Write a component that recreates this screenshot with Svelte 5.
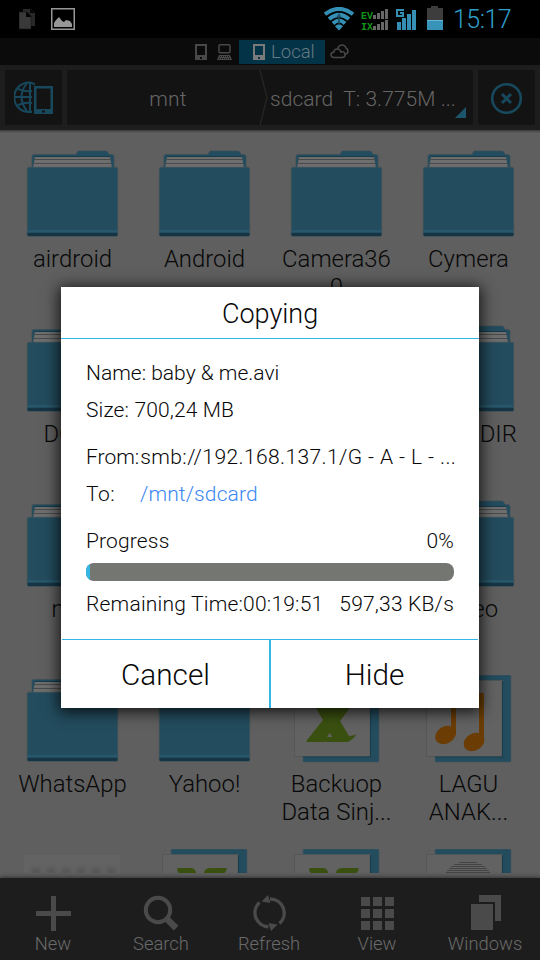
<script>
  const items = [
    { name: 'airdroid', type: 'folder' },
    { name: 'Android', type: 'folder' },
    { name: 'Camera360', type: 'folder' },
    { name: 'Cymera', type: 'folder' },
    { name: 'DCIM', type: 'folder' },
    { name: '', type: 'folder' },
    { name: '', type: 'folder' },
    { name: 'LOST.DIR', type: 'folder' },
    { name: 'mnt', type: 'folder' },
    { name: '', type: 'folder' },
    { name: '', type: 'folder' },
    { name: 'Video', type: 'folder' },
    { name: 'WhatsApp', type: 'folder' },
    { name: 'Yahoo!', type: 'folder' },
    { name: 'Backuop Data Sinj...', type: 'sheet' },
    { name: 'LAGU ANAK...', type: 'music' },
    { name: '', type: 'blank' },
    { name: '', type: 'sheet' },
    { name: '', type: 'sheet' },
    { name: '', type: 'print' },
  ]

  const actions = ['New', 'Search', 'Refresh', 'View', 'Windows']

  let progress = $state(1.1)
</script>

{#snippet phone()}
  <svg class="phone" width="12" height="16" viewBox="0 0 12 16">
    <path fill="currentColor" fill-rule="evenodd" d="M0 0h12v16H0zM2 2v9h8V2zM5 13v2h2v-2z" />
  </svg>
{/snippet}

<div class="screen">
  <header class="status">
    <svg class="copy" width="17" height="22" viewBox="0 0 17 22">
      <path fill="#292929" d="M4 1h8l4 4v13H4z" />
      <path fill="#393939" stroke="#151515" stroke-width=".6" d="M0 4h8l4 4v13H0z" />
      <path fill="#050505" d="M7 4v5h5v-1L8 4zM11 1v4h5z" />
    </svg>
    <svg class="picture" width="24" height="22" viewBox="0 0 24 22">
      <rect x=".75" y=".75" width="22.5" height="20.5" fill="none" stroke="#979797" stroke-width="1.5" />
      <path fill="#979797" d="M3 19v-4l2-3 3-3 3 4 2 1 2-2 4 1 2 3v3z" />
    </svg>
    <span class="gap"></span>
    <svg class="wifi" width="30" height="24" viewBox="0 0 30 24">
      <g fill="none" stroke="#358fb5" stroke-width="4">
        <path d="M1 7.200Q15-3.500 29 7.200" />
        <path d="M5 12Q15 3.700 25 12" />
        <path d="M9 16.500Q15 10.500 21 16.500" />
      </g>
      <path fill="#358fb5" d="M11 19.200Q15 15.500 19 19.200L15 23.500z" />
      <path fill="#174454" d="M15 6l2.500 4H16v8h-2v-8h-1.500z" opacity=".75" />
    </svg>
    <svg class="dual" width="28" height="22" viewBox="0 0 28 22">
      <text class="net" x="0" y="10">EV</text>
      <text class="net" x="0" y="21">IX</text>
      <path
        fill="#676767"
        d="M12 6h3v4h-3zM16 4h3v6h-3zM20 2h3v8h-3zM24 0h3v10h-3zM12 17h3v4h-3zM16 15h3v6h-3zM20 13h3v8h-3zM24 11h3v10h-3z"
      />
    </svg>
    <svg class="signal" width="20" height="22" viewBox="0 0 20 22">
      <path fill="#358fb5" d="M1 14h4v8H1zM6 10h4v12H6zM11 6h4v16h-4zM16 2h4v20h-4z" />
      <path fill="none" stroke="#358fb5" stroke-width="2" d="M8 2H1v6h6V5H4" />
    </svg>
    <svg class="battery" width="16" height="24" viewBox="0 0 16 24">
      <path fill="#3d3d3d" d="M0 2h4V0h7v2h5v13H0z" />
      <path fill="#3793b8" d="M0 14h16v10H0z" />
      <path fill="#65b7d5" d="M0 14h16v1H0z" />
    </svg>
    <span class="time">15:17</span>
  </header>

  <nav class="tabs">
    {@render phone()}
    <svg class="laptop" width="15" height="16" viewBox="0 0 15 16">
      <rect x="2" y=".8" width="11" height="8" rx="1" fill="none" stroke="#484848" stroke-width="1.500" />
      <path fill="#484848" d="M2 11h11l2 5H0z" />
      <path stroke="#151515" stroke-dasharray="1 1" d="M3 12.500h10M2 14.500h11" />
    </svg>
    <div class="local">{@render phone()}<span>Local</span></div>
    <svg class="cloud" width="19" height="15" viewBox="0 0 19 15">
      <g fill="#0b0b0b" stroke="#484848" stroke-width="1.500">
        <path d="M8 4q1-3 4-3t4 3q2 1 2 3 0 3-3 3H8z" />
        <path d="M4 13.500q-3 0-3-3 0-2 3-2.500 0-3 3.500-3Q10 5 11 8q4-1 4 3 0 2.500-3 2.500z" />
      </g>
    </svg>
  </nav>

  <div class="path-bar">
    <button class="tile" aria-label="Network">
      <svg width="40" height="34" viewBox="0 0 40 34">
        <g fill="none" stroke="#17485c" stroke-width="2">
          <path d="M21 3.500Q18 1.500 15 1.500A14.500 14.500 0 0 0 15 31h3" />
          <path d="M16 1v30M13 2q-11 14 0 28M1 16h17M4 8q8 3 14 2M4 24q7-3 14-2" />
        </g>
        <path fill="#17485c" fill-rule="evenodd" d="M20 5h19v28H20zM22.500 7.500V28h14V7.500zM28 29.500v2h3v-2z" />
      </svg>
    </button>
    <div class="crumbs">
      <span class="crumb">mnt</span>
      <svg class="chevron" width="10" height="55" viewBox="0 0 10 55">
        <path fill="none" stroke="#242424" stroke-width="1.500" d="M1 0l7 27.500L1 55" />
      </svg>
      <span class="crumb-last">sdcard&nbsp; T: 3.775M ...</span>
      <svg class="corner" width="11" height="11" viewBox="0 0 11 11"><path fill="#1c566c" d="M11 0v11H0z" /></svg>
    </div>
    <button class="tile" aria-label="Close">
      <svg width="32" height="32" viewBox="0 0 32 32">
        <g fill="none" stroke="#17485c">
          <circle cx="15.500" cy="16.500" r="14.300" stroke-width="2.600" />
          <path stroke-width="3" d="M11 12l9 9M20 12l-9 9" />
        </g>
      </svg>
    </button>
  </div>

  <main>
    <div class="grid">
      {#each items as item}
        <div class="item">
          <svg class="icon" width="100" height="90" viewBox="0 0 100 90">
            {#if item.type === 'folder'}
              <path fill="#234c5e" stroke="#3d5058" stroke-width=".7" d="M10 18V6q0-1.500 2-1.500h42L56 1h28q2 0 3 3.500h3q2 0 2 2V18z" />
              <path fill="#6e6e6e" d="M13 7h75l2 11H11z" />
              <path stroke="#173b4b" stroke-width="1" d="M13 6.500h75" />
              <path stroke="#484b4c" stroke-width="1" d="M12 9.500h77M11 13.500h79" />
              <rect x="5.300" y="17.300" width="90.400" height="69" rx="1.500" fill="#234c5e" stroke="#3f5159" stroke-width=".7" />
              <path fill="#28576b" d="M5.500 80h90v2h-90z" />
              <path fill="#153545" d="M5.500 83h90v2q0 1-2 1h-86q-2 0-2-1z" />
            {:else if item.type === 'blank'}
              <rect x="2" y="6" width="96" height="60" fill="#636363" />
              <path class="holes" stroke="#525252" stroke-width="5" stroke-dasharray="8 7" d="M10 22h83" />
            {:else}
              <rect x="17" y="0" width="76" height="87" rx="1" fill="#234c5e" stroke="#46565c" stroke-width=".6" />
              <rect x="8.500" y="5.500" width="76" height="76" fill="#626262" stroke="#505557" stroke-width=".8" />
              <path fill="none" stroke="#1b3e4d" stroke-width="1.200" d="M84.500 6v76H17" />
              {#if item.type === 'sheet'}
                <path
                  fill="#3a5010"
                  fill-rule="evenodd"
                  d="M24 19h13q3 0 4 2l5 11 5-11q2-2 5-2h15q3 0 1 3L54 46l9 15q4 0 7-2-1 4-8 8H21q-1 0 0-2l16-20-14-24q0-2 1-2zM44 58l-3 4h5z"
                />
              {:else if item.type === 'music'}
                <g fill="#6b3d04">
                  <path d="M33 18h33v6H38v36h-5zM61 18h5v48h-5z" />
                  <ellipse cx="27.500" cy="60" rx="11" ry="8.500" transform="rotate(-30 27.500 60)" />
                  <ellipse cx="56" cy="67" rx="11" ry="8.500" transform="rotate(-30 56 67)" />
                </g>
              {:else}
                <path stroke="#444" stroke-width="1" d="M41 13.500h18M36 15.500h28M33 17.500h34M31 19.500h38M29 21.500h42M28 23.500h44" />
              {/if}
            {/if}
          </svg>
          <span class="name">{item.name}</span>
        </div>
      {/each}
    </div>
  </main>

  <footer>
    {#each actions as action}
      <button class="action">
        <svg width="36" height="37" viewBox="0 0 36 37">
          {#if action === 'New'}
            <path fill="#4a4a4a" d="M16 1h5v15h15v5H21v15h-5V21H1v-5h15z" />
          {:else if action === 'Search'}
            <g fill="none" stroke="#4a4a4a">
              <circle cx="15" cy="15" r="12.200" stroke-width="4" />
              <path stroke-width="6.500" d="M24.500 24.500l8.500 8.500" stroke-linecap="square" stroke-dasharray="9 20" />
            </g>
          {:else if action === 'Refresh'}
            <g fill="none" stroke="#4a4a4a" stroke-width="3.400">
              <path d="M8.500 7.500A14 14 0 0 0 17.500 31.800" />
              <path d="M19 4A14 14 0 0 1 28.500 28.500" />
            </g>
            <path fill="#4a4a4a" d="M10.500 6.500L17 0 19.500 8zM26.500 29.500L20 36 17.500 28z" />
          {:else if action === 'View'}
            <path
              fill="#4a4a4a"
              d="M2 2h9v9H2zM14 2h9v9h-9zM26 2h9v9h-9zM2 14h9v9H2zM14 14h9v9h-9zM26 14h9v9h-9zM2 26h9v9H2zM14 26h9v9h-9zM26 26h9v9h-9z"
            />
          {:else}
            <path fill="#4a4a4a" d="M12 0h22v26h-6V7H12zM4 9h22v26H4z" />
          {/if}
        </svg>
        <span>{action}</span>
      </button>
    {/each}
  </footer>

  <section class="dialog">
    <h1>Copying</h1>
    <div class="body">
      <p class="file">Name: baby &amp; me.avi</p>
      <p class="size">Size: 700,24 MB</p>
      <p class="from"><span>From:</span><span class="from-path">smb://192.168.137.1/G - A - L - ...</span></p>
      <p class="to"><span class="to-label">To:</span><span class="link">/mnt/sdcard</span></p>
      <p class="split progress"><span>Progress</span><span>0%</span></p>
      <div class="bar"><div class="fill" style="width: {progress}%"></div></div>
      <p class="split remaining"><span>Remaining Time:00:19:51</span><span>597,33 KB/s</span></p>
    </div>
    <div class="buttons">
      <button>Cancel</button>
      <button>Hide</button>
    </div>
  </section>
</div>

<style>
  :global(body) {
    margin: 0;
    background: #000;
  }

  .screen {
    position: relative;
    display: flex;
    flex-direction: column;
    width: 540px;
    height: 960px;
    overflow: hidden;
    background: #5f5f5f;
    font-family: Roboto, sans-serif;
    font-weight: 300;
    white-space: nowrap;
  }

  svg {
    display: block;
    flex: none;
  }

  button {
    appearance: none;
    border: 0;
    padding: 0;
    margin: 0;
    background: none;
    font: inherit;
    color: inherit;
  }

  .status {
    display: flex;
    align-items: flex-start;
    height: 38px;
    background: #000;
  }

  .copy {
    margin: 8px 15px 0 19px;
  }

  .picture,
  .signal {
    margin-top: 8px;
  }

  .gap {
    flex: 1;
  }

  .wifi {
    margin: 7px 7px 0 0;
  }

  .dual {
    margin: 9px 7px 0 0;
    overflow: visible;
  }

  .net {
    font: bold 10px 'Liberation Mono', monospace;
    fill: #13951c;
  }

  .battery {
    margin: 6px 10px 0 11px;
  }

  .time {
    width: 87px;
    color: #2f9fca;
    font-size: 25px;
    letter-spacing: -0.5px;
    line-height: 39px;
  }

  .tabs {
    display: flex;
    align-items: center;
    height: 27px;
    padding-left: 195px;
    background: #0b0b0b;
    color: #484848;
  }

  .laptop {
    margin: 0 7px 0 10px;
  }

  .local {
    display: flex;
    align-items: center;
    box-sizing: border-box;
    width: 86px;
    height: 24px;
    margin-right: 5px;
    padding-left: 14px;
    background: #033347;
    color: #7a7a7a;
    font-size: 18.5px;
  }

  .local span {
    margin-left: 6px;
    color: #667b84;
  }

  .path-bar {
    display: flex;
    gap: 5px;
    box-sizing: border-box;
    height: 65px;
    padding: 5px;
    background: #1d1d1d;
    color: #666;
    font-size: 21px;
  }

  .tile {
    display: flex;
    align-items: center;
    justify-content: center;
    width: 57px;
    height: 55px;
    border-radius: 2px;
    background: #131313;
  }

  .crumbs {
    position: relative;
    display: flex;
    align-items: center;
    flex: 1;
    height: 55px;
    border-radius: 2px;
    background: #131313;
  }

  .crumb {
    box-sizing: border-box;
    width: 192px;
    padding: 2px 0 0 10px;
    letter-spacing: 0.2px;
    text-align: center;
  }

  .crumb-last {
    padding: 2px 0 0 1px;
    letter-spacing: 0.05px;
  }

  .corner {
    position: absolute;
    right: 7px;
    bottom: 7px;
  }

  main {
    flex: none;
    height: 743px;
    overflow: hidden;
    background: linear-gradient(#3a3a3a, #5f5f5f 3px);
  }

  .grid {
    display: grid;
    grid-template-columns: repeat(4, 132px);
    grid-template-rows: repeat(3, 175px) 174px 175px;
    padding: 20px 6px 0;
  }

  .item {
    display: flex;
    flex-direction: column;
    align-items: center;
  }

  .icon {
    margin-bottom: 5px;
  }

  .holes {
    filter: blur(2px);
  }

  .name {
    width: 114px;
    padding-left: 1px;
    color: #080808;
    font-size: 23.9px;
    line-height: 28px;
    text-align: center;
    white-space: normal;
    overflow-wrap: anywhere;
  }

  footer {
    display: flex;
    box-sizing: border-box;
    height: 82px;
    margin-top: 5px;
    padding-top: 17px;
    background: #1d1d1d;
    box-shadow: 0 -1px 4px #333;
    color: #6a6a6a;
    font-size: 18.4px;
  }

  .action {
    display: flex;
    flex-direction: column;
    align-items: center;
    width: 108px;
    margin-left: -1px;
    margin-right: 1px;
    line-height: 24px;
  }

  .dialog {
    position: absolute;
    top: 287px;
    left: 61px;
    display: flex;
    flex-direction: column;
    width: 418px;
    height: 421px;
    background: #fff;
    box-shadow: 0 2px 14px 2px rgba(0, 0, 0, 0.8);
    color: #080808;
  }

  h1 {
    height: 51px;
    margin: 0;
    border-bottom: 1px solid #33b5e5;
    font-size: 27px;
    font-weight: 300;
    line-height: 55px;
    text-align: center;
  }

  .body {
    flex: 1;
    padding: 16px 25px 0;
    font-size: 21px;
  }

  p {
    height: 37px;
    margin: 0;
    line-height: 37px;
  }

  .size {
    letter-spacing: 0.13px;
  }

  .from {
    margin-top: 10px;
  }

  .from-path {
    margin-left: 1px;
    letter-spacing: 0.4px;
  }

  .to {
    display: flex;
    letter-spacing: 0.1px;
  }

  .to-label {
    width: 54px;
    letter-spacing: 0.5px;
  }

  .link {
    color: #3a87f2;
  }

  .split {
    display: flex;
    justify-content: space-between;
  }

  .progress {
    margin-top: 10px;
    letter-spacing: 0.15px;
  }

  .bar {
    height: 18px;
    margin: 3px 0 5px;
    border-radius: 8px;
    overflow: hidden;
    background: #747672;
  }

  .remaining {
    letter-spacing: 0.2px;
  }

  .fill {
    height: 100%;
    background: #33b5e5;
  }

  .buttons {
    display: flex;
    height: 68px;
    margin: 0 1px;
    border-top: 1px solid #33b5e5;
  }

  .buttons button {
    flex: 1;
    font-size: 29.7px;
  }

  .buttons button + button {
    border-left: 2px solid #33b5e5;
  }
</style>
